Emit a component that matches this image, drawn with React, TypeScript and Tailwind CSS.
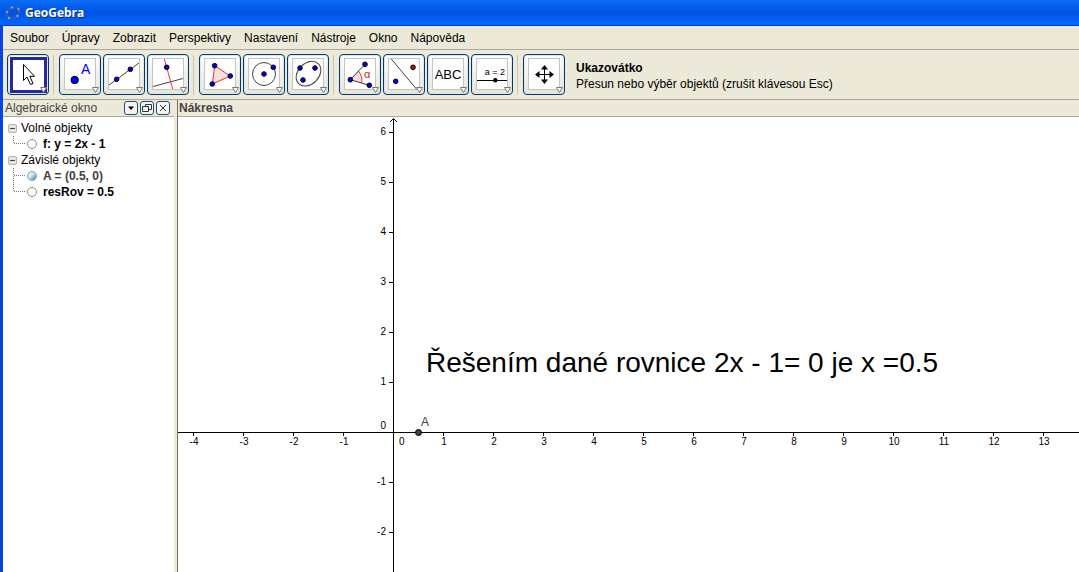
import React from 'react';

const menus = ['Soubor', 'Úpravy', 'Zobrazit', 'Perspektivy', 'Nastavení', 'Nástroje', 'Okno', 'Nápověda'];

const UNIT = 50;
const ORIGIN_X = 215;
const ORIGIN_Y = 315;
const xTicks = Array.from({ length: 18 }, (_, i) => i - 4).filter((n) => n !== 0);
const yTicks = Array.from({ length: 9 }, (_, i) => 6 - i).filter((n) => n !== 0);

function Dot({ x, y, r = 2.3, fill = '#0000ff' }: { x: number; y: number; r?: number; fill?: string }) {
  return <circle cx={x} cy={y} r={r} fill={fill} stroke="#000" strokeWidth="1" />;
}

const toolGroups: { name: string; icon: React.ReactNode }[][] = [
  [
    {
      name: 'Ukazovátko',
      icon: <path d="M16.5 10.5V26.5L20 23L23.5 30.5L26 29.5L22.8 22.3H27.5Z" fill="#fff" stroke="#000" />,
    },
  ],
  [
    {
      name: 'Nový bod',
      icon: (
        <>
          <Dot x={15.7} y={26} r={3.7} />
          <text x="22" y="20" fontSize="14" fill="#0000ff">A</text>
        </>
      ),
    },
    {
      name: 'Přímka',
      icon: (
        <>
          <path d="M6 31L36 9" stroke="#444" />
          <Dot x={13.7} y={25.3} />
          <Dot x={27.3} y={15.3} />
        </>
      ),
    },
    {
      name: 'Kolmice',
      icon: (
        <>
          <path d="M6 32.5L36 24.5" stroke="#444" />
          <path d="M17.3 5L25.7 35" stroke="#ff3030" />
          <Dot x={19.7} y={13.3} />
        </>
      ),
    },
  ],
  [
    {
      name: 'Mnohoúhelník',
      icon: (
        <>
          <path d="M15.7 11.7L31.3 22L13.3 30Z" fill="#fbdede" stroke="#d33" />
          <Dot x={15.7} y={11.7} />
          <Dot x={31.3} y={22} />
          <Dot x={13.3} y={30} />
        </>
      ),
    },
    {
      name: 'Kružnice',
      icon: (
        <>
          <circle cx="21" cy="20" r="11.5" stroke="#444" />
          <Dot x={21} y={20} />
          <Dot x={30.3} y={13.3} />
        </>
      ),
    },
    {
      name: 'Elipsa',
      icon: (
        <>
          <ellipse cx="21.5" cy="19.7" rx="14" ry="10.4" transform="rotate(-45 21.5 19.7)" stroke="#444" />
          <Dot x={13} y={14} />
          <Dot x={28} y={14} />
          <Dot x={16} y={26} />
        </>
      ),
    },
  ],
  [
    {
      name: 'Úhel',
      icon: (
        <>
          <path d="M11.3 25.7L19.3 17Q23.5 21.5 22.8 28.5Z" fill="#fbdede" />
          <path d="M19.3 17Q23.5 21.5 22.8 28.5" stroke="#d33" />
          <path d="M26 10.3L11.3 25.7L30.3 31.3" stroke="#333" />
          <Dot x={11.3} y={25.7} />
          <Dot x={26} y={10.3} />
          <Dot x={30.3} y={31.3} />
          <text x="25" y="24" fontSize="11" fill="#d22">α</text>
        </>
      ),
    },
    {
      name: 'Osová souměrnost',
      icon: (
        <>
          <path d="M8.3 5L33.7 35.3" stroke="#444" />
          <Dot x={30} y={13.3} fill="#e00000" />
          <Dot x={12.7} y={27.3} />
        </>
      ),
    },
    { name: 'Vložit text', icon: <text x="21" y="25" fontSize="13" textAnchor="middle" fill="#000">ABC</text> },
    {
      name: 'Posuvník',
      icon: (
        <>
          <text x="24" y="21" fontSize="9" textAnchor="middle" fill="#000">a = 2</text>
          <path d="M6 26.5H36" stroke="#000" />
          <circle cx="24.3" cy="26.3" r="2.2" fill="#000" />
        </>
      ),
    },
  ],
  [
    {
      name: 'Pohyb nákresnou',
      icon: (
        <>
          <path d="M21.5 13V28M14 20.5H29" stroke="#000" />
          <path d="M21.5 11L25 15.5H18ZM21.5 30L25 25.5H18ZM12 20.5L16.5 17V24ZM31 20.5L26.5 17V24Z" fill="#000" />
        </>
      ),
    },
  ],
];

function ToolButton({ name, icon, active }: { name: string; icon: React.ReactNode; active?: boolean }) {
  return (
    <button
      aria-label={name}
      aria-pressed={active}
      className="w-[42px] h-[41px] shrink-0 rounded-[4px] border border-[#003c74] bg-linear-to-b from-white to-[#e6e3d8] shadow-[inset_0_0_0_1px_#dfe6ea]"
    >
      <svg viewBox="1 1 40 39" className="block w-full h-full" fill="none" fontFamily="Liberation Sans, sans-serif">
        {active ? (
          <rect x="4.5" y="4.5" width="34" height="33" fill="#fff" stroke="#2828a4" strokeWidth="3" />
        ) : (
          <rect x="5.5" y="4.5" width="31" height="31" fill="#fff" stroke="#c4c4c4" />
        )}
        {icon}
        <path d="M33.5 33.5H39.5L36.5 38.5Z" fill="#fff" stroke="#777" />
      </svg>
    </button>
  );
}

function Branch({ last }: { last?: boolean }) {
  return (
    <svg viewBox="0 0 13 16" className="w-[13px] h-4 shrink-0" fill="none" stroke="#808080" strokeDasharray="1 1">
      <path d={last ? 'M0.5 0V8' : 'M0.5 0V16'} />
      <path d="M1 7.5H12" />
    </svg>
  );
}

function Item({ label, last, aux }: { label: string; last?: boolean; aux?: boolean }) {
  return (
    <li className="flex items-center h-4 pl-[10px]">
      <Branch last={last} />
      <button
        aria-label={`Zobrazit ${label}`}
        className={
          aux
            ? 'ml-px w-[10px] h-[10px] rounded-full border border-[#8aa0ac] bg-linear-to-br from-[#d5eef5] from-40% to-[#2a7fa5]'
            : 'ml-px w-[10px] h-[10px] rounded-full border border-[#8f8f78] bg-white'
        }
      />
      <span className={aux ? 'ml-1.5 font-bold text-[#404040]' : 'ml-1.5 font-bold'}>{label}</span>
    </li>
  );
}

function Folder({ label, children }: { label: string; children: React.ReactNode }) {
  return (
    <li>
      <div className="flex items-center h-4 gap-1 pl-[5px]">
        <button aria-label={`Sbalit ${label}`} className="flex items-center justify-center w-[9px] h-[9px] rounded-[2px] border border-[#b4b4b4] bg-[#e4e4e4]">
          <span className="w-[5px] h-px bg-[#444]" />
        </button>
        <span>{label}</span>
      </div>
      <ul>{children}</ul>
    </li>
  );
}

function PanelButton({ name, children }: { name: string; children: React.ReactNode }) {
  return (
    <button aria-label={name} className="w-[14px] h-[14px] rounded-[3px] border border-[#1d4e7e] bg-[#f4f3ee]">
      <svg viewBox="0 0 12 12" className="block w-full h-full" fill="none" stroke="#333">{children}</svg>
    </button>
  );
}

function AlgebraView() {
  return (
    <aside className="w-[171px] shrink-0 flex flex-col">
      <header className="flex items-center h-[17px] pl-0.5 pr-1 bg-[#ece9d8] border-b border-[#aca899]">
        <h2 className="flex-1 text-[#444]">Algebraické okno</h2>
        <div className="flex gap-0.5">
          <PanelButton name="Nabídka">
            <path d="M3 4.5H9L6 8Z" fill="#000" stroke="none" />
          </PanelButton>
          <PanelButton name="Oddělit okno">
            <path d="M1.5 4.5H7.5V9.5H1.5ZM4.5 4V2.5H10.5V7.5H8" />
          </PanelButton>
          <PanelButton name="Zavřít">
            <path d="M3 3L9 9M9 3L3 9" />
          </PanelButton>
        </div>
      </header>
      <ul className="flex-1 pt-[3px] bg-white">
        <Folder label="Volné objekty">
          <Item label="f: y = 2x - 1" last />
        </Folder>
        <Folder label="Závislé objekty">
          <Item label="A = (0.5, 0)" aux />
          <Item label="resRov = 0.5" last />
        </Folder>
      </ul>
    </aside>
  );
}

function Graphics() {
  return (
    <svg className="flex-1 min-h-0 w-full bg-white" fontFamily="Liberation Sans, sans-serif" fontSize="10" fill="#000">
      <g stroke="#000" shapeRendering="crispEdges">
        <line x1="0" y1={ORIGIN_Y + 0.5} x2="100%" y2={ORIGIN_Y + 0.5} />
        <line x1={ORIGIN_X + 0.5} y1="2" x2={ORIGIN_X + 0.5} y2="100%" />
        {xTicks.map((n) => (
          <path key={n} d={`M${ORIGIN_X + n * UNIT + 0.5} ${ORIGIN_Y}v4`} />
        ))}
        {yTicks.map((n) => (
          <path key={n} d={`M${ORIGIN_X - 4} ${ORIGIN_Y - n * UNIT + 0.5}h4`} />
        ))}
      </g>
      <path d={`M${ORIGIN_X - 3} 5L${ORIGIN_X + 0.5} 1.5L${ORIGIN_X + 4} 5`} fill="none" stroke="#000" />
      {xTicks.map((n) => (
        <text key={n} x={ORIGIN_X + n * UNIT + 1} y={ORIGIN_Y + 13} textAnchor="middle">{n}</text>
      ))}
      {yTicks.map((n) => (
        <text key={n} x={ORIGIN_X - 7} y={ORIGIN_Y - n * UNIT + 3} textAnchor="end">{n}</text>
      ))}
      <text x={ORIGIN_X - 7} y={ORIGIN_Y - 3} textAnchor="end">0</text>
      <text x={ORIGIN_X + 6} y={ORIGIN_Y + 13}>0</text>
      <circle cx={ORIGIN_X + UNIT / 2 + 0.5} cy={ORIGIN_Y + 0.5} r="3" fill="#404040" stroke="#000" />
      <text x={ORIGIN_X + 28} y={ORIGIN_Y - 6} fontSize="12" fill="#404040">A</text>
      <text x={ORIGIN_X + 33} y={ORIGIN_Y - 60} fontSize="28">Řešením dané rovnice 2x - 1= 0 je x =0.5</text>
    </svg>
  );
}

export default function App() {
  return (
    <div className="flex flex-col h-screen overflow-hidden bg-[#ece9d8] text-xs leading-4 text-black font-['Liberation_Sans',Arial,sans-serif]">
      <header className="flex items-center shrink-0 h-[26px] pl-[5px] gap-1 bg-linear-to-b from-[#0a6cf5] via-[#0054e3] to-[#0068ff] border-b border-[#0040c0]">
        <svg viewBox="0 0 16 16" className="w-4 h-4" fill="none">
          <ellipse cx="8" cy="8" rx="6.5" ry="5" transform="rotate(-25 8 8)" stroke="#55606e" />
          <g fill="#a9a4ff" stroke="#3a3f70" strokeWidth="0.5">
            <circle cx="2" cy="7" r="1.4" />
            <circle cx="7" cy="2.5" r="1.4" />
            <circle cx="13.5" cy="4" r="1.4" />
            <circle cx="12.5" cy="11" r="1.4" />
            <circle cx="4" cy="13" r="1.4" />
          </g>
        </svg>
        <h1 className="font-['Open_Sans',sans-serif] text-xs font-bold text-white [text-shadow:1px_1px_#0a2a80]">GeoGebra</h1>
      </header>
      <div className="flex flex-col flex-1 min-h-0 border-l-3 border-[#0844e0]">
        <nav className="flex items-center shrink-0 h-6 pl-[7px] gap-[13px] border-b border-[#aca899]">
          {menus.map((menu) => (
            <button key={menu}>{menu}</button>
          ))}
        </nav>
        <div className="flex items-center shrink-0 h-[50px] pl-1 border-b border-[#aca899]">
          {toolGroups.map((group, g) => (
            <React.Fragment key={g}>
              {g > 0 && <span className="w-px h-10 ml-1 mr-[5px] shrink-0 bg-[#c9c5b2]" />}
              <div className="flex gap-0.5">
                {group.map((tool) => (
                  <ToolButton key={tool.name} name={tool.name} icon={tool.icon} active={g === 0} />
                ))}
              </div>
            </React.Fragment>
          ))}
          <div className="ml-[11px] pt-0.5 whitespace-nowrap">
            <p className="font-bold">Ukazovátko</p>
            <p>Přesun nebo výběr objektů (zrušit klávesou Esc)</p>
          </div>
        </div>
        <div className="flex flex-1 min-h-0">
          <AlgebraView />
          <main className="flex flex-col flex-1 min-w-0 ml-[3px] border-l border-[#716f64]">
            <h2 className="shrink-0 h-[17px] pl-px font-bold text-[#444] bg-[#ece9d8] border-b border-[#aca899]">Nákresna</h2>
            <Graphics />
          </main>
        </div>
      </div>
    </div>
  );
}
